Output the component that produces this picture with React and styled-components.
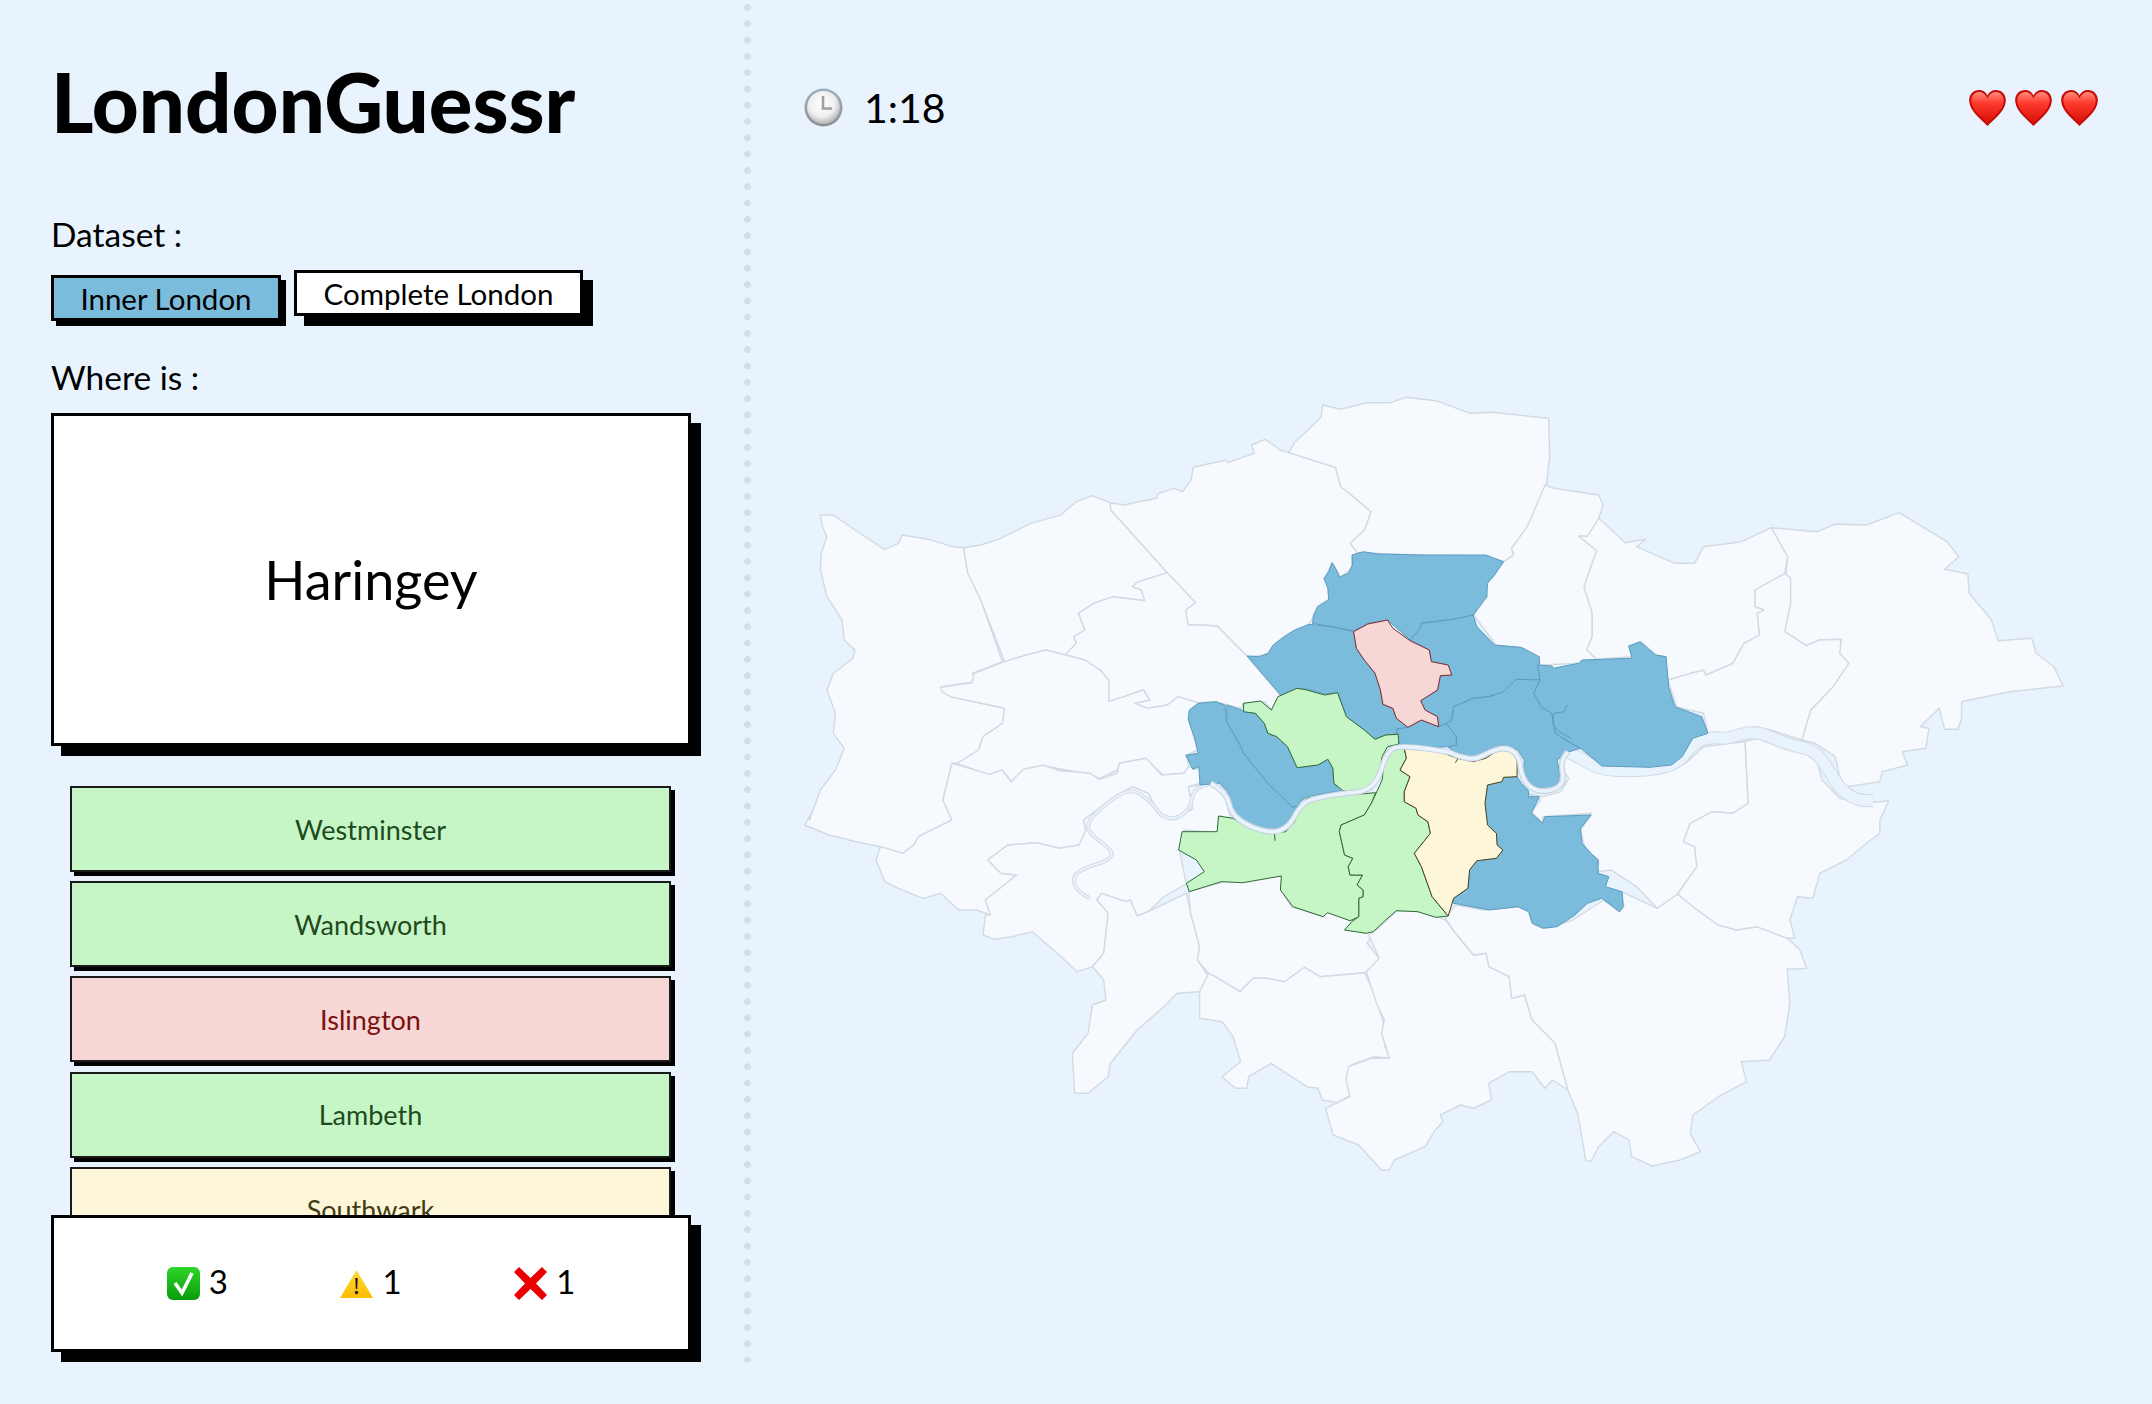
import React from 'react'
import styled, { createGlobalStyle } from 'styled-components'

const GlobalStyle = createGlobalStyle`
    html, body {
        margin: 0;
        background: #e8f3fe;
        font-family: 'Lato', 'Open Sans', sans-serif;
        color: #000;
    }
    #root {
        height: 1404px;
        overflow: hidden;
    }
`

const Page = styled.div`
    display: flex;
    width: 2152px;
    height: 1404px;
`

const Sidebar = styled.aside`
    width: 751px;
    height: 1362px;
    flex-shrink: 0;
    box-sizing: border-box;
    padding-left: 51px;
    display: flex;
    flex-direction: column;
    background-image: radial-gradient(circle at 3.5px 3.5px, #d3dee8 3.2px, transparent 3.7px);
    background-size: 7px 16.3px;
    background-repeat: repeat-y;
    background-position: right 0 top 4px;
`

const Title = styled.h1`
    margin: 54px 0 0;
    font-size: 81.5px;
    line-height: 96px;
    font-weight: 900;
`

const Label = styled.div`
    margin-top: ${(p) => p.$top}px;
    font-size: 33.5px;
    line-height: 40px;
`

const ButtonRow = styled.div`
    display: flex;
    align-items: flex-start;
    gap: 13px;
    margin-top: 16px;
    height: 56px;
`

const DatasetButton = styled.button`
    box-sizing: border-box;
    height: 46px;
    padding: 0;
    width: ${(p) => p.$width}px;
    margin-top: ${(p) => (p.$active ? 5 : 0)}px;
    border: 3px solid #000;
    background: ${(p) => (p.$active ? '#7bbcdc' : '#fff')};
    box-shadow: ${(p) => (p.$active ? '5px 5px 0 #000' : '10px 10px 0 #000')};
    font-family: inherit;
    font-size: 29.5px;
    color: #000;
`

const QuestionCard = styled.div`
    box-sizing: border-box;
    width: 640px;
    height: 333px;
    margin-top: 16px;
    border: 3px solid #000;
    background: #fff;
    box-shadow: 10px 10px 0 #000;
    display: flex;
    align-items: center;
    justify-content: center;
    font-size: 54px;
`

const AnswerList = styled.div`
    flex: 1;
    min-height: 0;
    overflow: hidden;
    margin-top: 40px;
    padding: 0 19px;
    width: 640px;
    box-sizing: border-box;
    display: flex;
    flex-direction: column;
    gap: 9.2px;
`

const tones = {
    good: { bg: '#c6f6c6', fg: '#1e4a1e' },
    bad: { bg: '#f7d6d6', fg: '#7b1010' },
    close: { bg: '#fef6d8', fg: '#3f3c14' },
}

const Answer = styled.div`
    box-sizing: border-box;
    flex-shrink: 0;
    width: 601px;
    height: 86px;
    border: 2px solid #1a1a1a;
    background: ${(p) => tones[p.$tone].bg};
    color: ${(p) => tones[p.$tone].fg};
    box-shadow: 4px 4px 0 #000;
    display: flex;
    align-items: center;
    justify-content: center;
    font-size: 27px;
`

const ScoreCard = styled.div`
    box-sizing: border-box;
    flex-shrink: 0;
    position: relative;
    width: 640px;
    height: 137px;
    margin-bottom: 10px;
    border: 3px solid #000;
    background: #fff;
    box-shadow: 10px 10px 0 #000;
    display: flex;
    align-items: center;
    justify-content: space-evenly;
    font-size: 33px;
`

const Score = styled.div`
    display: flex;
    align-items: center;
    gap: 9px;
`

const Count = styled.span`
    margin-bottom: 5px;
`

const Main = styled.main`
    flex: 1;
    display: flex;
    flex-direction: column;
`

const TopBar = styled.header`
    box-sizing: border-box;
    height: 216px;
    flex-shrink: 0;
    padding: 88px 54px 0 53px;
    display: flex;
    justify-content: space-between;
    align-items: flex-start;
`

const Timer = styled.div`
    display: flex;
    align-items: center;
    gap: 21px;
    font-size: 41px;
    line-height: 38px;
`

const Hearts = styled.div`
    display: flex;
    gap: 9px;
    margin-top: 2px;
`

const MapFrame = styled.svg`
    display: block;
    width: 1401px;
    height: 1188px;
    stroke-linejoin: round;
`

// traced in screen coordinates, one frame per map area
const frame = (ox, oy, sx, sy) => ([str]) =>
    str
        .trim()
        .split(/\s+/)
        .map((p) => {
            const [x, y] = p.split(',').map(Number)
            return `${(ox + x / sx).toFixed(1)},${(oy + y / sy).toFixed(1)}`
        })

const nw = frame(790, 380, 2.306, 3)
const mid = frame(1150, 520, 2.8, 3)
const ne = frame(1400, 380, 2.24, 3)
const sw = frame(780, 680, 2.24, 3)
const so = frame(1050, 870, 1.96, 3)

const shape = (...parts) => `M${parts.flat().join('L')}Z`
const line = (...parts) => `M${parts.flat().join('L')}`

// rounds a traced line off with quadratic curves, for the river
const smooth = (...parts) => {
    const pts = parts.flat().map((p) => p.split(',').map(Number))
    let d = `M${pts[0].join(',')}`
    for (let i = 1; i < pts.length - 1; i++) {
        const mx = ((pts[i][0] + pts[i + 1][0]) / 2).toFixed(1)
        const my = ((pts[i][1] + pts[i + 1][1]) / 2).toFixed(1)
        d += `Q${pts[i].join(',')} ${mx},${my}`
    }
    return `${d}L${pts[pts.length - 1].join(',')}`
}

const outerBoroughs = [
    // Hillingdon
    shape(
        nw`70,405 100,405 150,450 218,508 250,490 258,465 320,478 375,500 400,503 410,580 440,660 490,845 420,880 428,905 350,920 350,935 370,950 495,985 490,1030 445,1070 435,1110 390,1150 380,1150`,
        sw`385,250 365,360 385,420 310,470 300,495 275,520 225,500 170,485 110,465 55,435 70,400`,
        nw`45,1320 70,1230 105,1170 125,1105 100,1060 105,1000 85,930 100,880 145,835 150,810 125,780 120,720 85,650 70,570 72,520 85,470 75,440`
    ),
    // Harrow
    shape(nw`400,503 440,495 480,478 540,440 555,430 610,410 625,405 660,365 698,347 738,368 740,390 870,578 800,607 790,620 810,630 818,662 745,650 700,670 665,700 680,750 655,770 660,790 635,825 590,810 545,825 495,845 440,660 410,580`),
    // Barnet
    shape(nw`738,368 770,375 845,355 850,340 885,325 905,335 925,300 930,262 1005,240 1010,248 1070,220 1065,195 1095,178 1115,195 1130,210 1150,218 1258,262 1270,320 1290,340 1340,395 1325,450 1292,490 1308,518 1295,530 1295,565 1270,590 1250,548 1235,590 1245,655 1215,680 1205,715 1195,735 1140,775 1100,825 1055,830 985,738 945,735 918,735 912,690 935,668 870,578 740,390`),
    // Enfield
    shape(
        nw`1150,218 1165,185 1190,155 1225,110 1228,75 1270,88 1330,68 1385,68 1420,52 1490,62`,
        ne`157,100 205,97 333,115 335,230 328,315 325,360 285,440 250,505 255,525 232,545 190,528 45,525`,
        nw`1308,518 1292,490 1325,450 1340,395 1290,340 1270,320 1258,262`
    ),
    // Brent
    shape(nw`635,825 660,790 655,770 680,750 665,700 700,670 745,650 818,662 810,630 790,620 800,607 870,578 935,668 912,690 918,735 945,735 985,738 1055,830 1130,945 1110,990 1095,965 1045,970 1040,985 980,965 940,968 895,950 870,975 825,985 795,970 830,960 815,930 770,950 735,965 735,900 715,870 680,840`),
    // Ealing
    shape(nw`347,922 420,908 425,880 495,845 545,825 590,810 635,825 680,840 715,870 735,900 735,965 770,950 815,930 830,960 795,970 825,985 870,975 895,950 940,968 920,1020 940,1110 915,1125 920,1165 910,1180 860,1185 820,1135 760,1150 755,1170 715,1195 660,1175 585,1158 540,1170 510,1205 490,1170 460,1185 385,1150 435,1110 445,1070 490,1030 495,985 370,950 350,935`),
    // Hounslow
    shape(sw`385,250 470,283 497,270 518,305 545,268 590,255 625,272 660,275 695,280 715,298 755,280 760,250 820,235 855,285 905,280 915,260 940,270 940,310 915,320 925,385 885,420 850,405 825,340 790,320 755,345 680,420 685,450 670,495 625,505 575,488 510,495 465,540 495,580 530,585 460,660 472,705 440,690 400,690 360,640 320,655 265,625 235,605 215,540 225,500 275,520 300,495 310,470 385,420 365,360`),
    // Richmond
    shape(sw`465,540 510,495 575,488 625,505 670,495 685,450 680,420 755,345 790,320 825,340 850,405 885,420 925,385 915,320 965,310 1000,330 1005,390 1010,420 985,408 980,458 905,450 895,510 910,612 860,650 825,695 800,708 785,660 775,665 720,640 710,660 735,700 725,820 700,860 665,875 630,830 565,755 520,770 480,778 455,765 460,705 472,705 460,660 530,585 495,580`),
    // Kingston
    shape(sw`710,660 735,700 725,820 700,860 725,900 730,960 700,975 690,1060 655,1120 660,1240 690,1240 735,1190 740,1150 800,1050 860,980 890,940 940,935 960,890 935,840 940,800 920,700 910,640 825,695 800,708 785,660 775,665 720,640`),
    // Merton
    shape(sw`915,635 1000,603 1125,588 1122,630 1145,680 1215,710 1230,695 1285,720 1265,750 1310,755 1330,755 1315,790 1345,840 1310,878 1210,890 1175,862 1130,905 1090,895 1060,895 1030,935 975,890 960,880 935,840 940,800 920,700`),
    // Sutton
    shape(sw`940,935 960,880 975,890 1030,935 1060,895 1090,895 1130,905 1175,862 1210,890 1310,878 1330,940 1350,1020 1355,1100 1368,1135 1330,1130 1280,1155 1270,1180 1278,1245 1250,1268 1215,1260 1205,1225 1180,1220 1100,1150 1050,1190 1045,1225 1020,1225 990,1190 1032,1145 1015,1070 990,1025 940,1015`),
    // Croydon
    shape(so`625,195 645,265 620,305 640,400 655,450 650,490 665,565 630,565 585,590 580,630 588,680 540,715 555,795 605,825 650,900 665,900 675,870 735,830 755,780 770,755 765,735 805,705 830,715 865,690 860,640 900,605 945,605 970,655 985,630 1015,660 990,520 945,450 930,375 905,385 900,320 860,290 855,250 830,255 795,190 775,150 735,125 680,122 640,180`),
    // Bromley
    shape(so`775,145 795,105 850,120 920,110 945,130 950,165 975,175 1025,150 1085,90 1115,125 1125,110 1120,65 1190,115 1230,72 1260,110 1310,165 1345,180 1385,170 1445,205 1470,240 1483,295 1445,298 1450,400 1440,500 1410,570 1355,575 1365,635 1310,680 1260,735 1255,790 1275,845 1235,870 1180,888 1140,860 1135,810 1105,785 1075,830 1060,875 1050,870 1035,735 1015,660 990,520 945,450 930,375 905,385 900,320 860,290 855,250 830,255 795,190`),
    // Greenwich
    shape(
        ne`285,1240 320,1250 360,1235 378,1195 360,1160 370,1120 400,1130 450,1180 560,1180 640,1150 680,1100 740,1090 773,1085 780,1270 745,1300 700,1295 650,1330 635,1385 660,1400 665,1460`,
        so`1230,72 1190,115 1150,50 1100,0`,
        ne`440,1475 445,1440 415,1410 405,1350 430,1300 320,1310 320,1330 295,1295 315,1260`
    ),
    // Bexley
    shape(
        ne`773,1085 800,1075 870,1110 930,1125 945,1200 985,1255 1040,1270 1095,1262 1075,1320 1075,1360 1045,1390 1000,1440 940,1480`,
        so`1509,9 1495,85 1465,80 1450,150 1460,205 1445,205 1385,170 1345,180 1310,165 1260,110 1230,72`,
        ne`665,1460 660,1400 635,1385 650,1330 700,1295 745,1300 780,1270`
    ),
    // Havering
    shape(ne`832,443 935,455 975,432 1045,435 1118,398 1225,485 1252,530 1220,568 1272,582 1275,640 1325,720 1340,782 1415,775 1425,820 1465,860 1485,918 1365,935 1258,965 1258,1015 1250,1048 1220,1048 1208,985 1165,1040 1185,1045 1178,1105 1125,1115 1137,1155 1080,1175 1075,1205 1000,1220 985,1190 975,1130 930,1090 900,1080 920,990 970,920 1005,850 985,820 988,778 940,780 910,797 862,755 875,650 865,580 868,530`),
    // Barking and Dagenham
    shape(ne`862,580 875,595 875,670 862,755 910,797 940,780 988,778 985,820 1005,850 970,920 920,990 900,1080 830,1050 795,1040 730,1070 690,1060 680,1000 620,982 600,900 650,880 680,870 685,885 745,850 770,790 805,765 800,700 815,690 795,680 795,630`),
    // Redbridge
    shape(ne`445,415 505,488 550,478 530,500 615,550 660,550 680,500 765,485 832,443 868,530 862,580 795,630 795,680 815,690 800,700 805,765 770,790 745,850 685,885 680,870 650,880 600,900 595,830 575,825 540,785 515,798 520,830 440,838 418,810 430,770 430,700 412,620 440,512 400,468 420,468`),
    // Waltham Forest
    shape(ne`325,315 345,325 445,345 455,375 445,415 420,468 400,468 440,512 412,620 430,700 430,770 418,810 440,838 405,850 315,855 290,820 215,795 165,705 195,650 190,610 232,545 255,525 250,505 285,440`),
]

const blueBoroughs = [
    // Haringey
    shape(mid`455,310 458,285 470,260 500,240 498,205 487,175 500,155 510,128 522,150 530,172 555,160 567,135 566,105 597,95 640,102 760,105 940,105 990,125 965,165 945,190 943,230 925,255 905,285 850,298 760,310 757,325 728,360 665,300 610,310 570,333 510,320`),
    // Camden
    shape(mid`272,408 305,410 330,400 345,375 375,350 405,330 445,313 510,320 570,335 578,385 600,420 630,460 645,510 652,553 680,565 690,595 722,622 690,628 693,642 660,645 630,658 600,630 550,590 525,518 490,522 440,508 412,505 370,530`),
    // Hammersmith and Fulham
    shape(mid`107,598 110,570 135,550 185,545 210,555 215,605 255,680 262,700 330,790 398,860 415,860 405,905 380,935 340,940 290,930 240,895 225,860 218,815 195,790 140,795 137,740 120,748 100,706 135,700 125,655`),
    // Kensington and Chelsea
    shape(mid`215,555 262,572 295,580 320,610 330,640 355,650 385,680 412,743 470,735 498,718 512,745 515,790 535,812 440,830 420,845 415,860 398,860 330,790 262,700 255,680 215,605`),
    // Lewisham
    shape(mid`945,795 985,785 990,772 1028,770 1040,790 1060,812 1060,830 1090,830 1068,880 1100,910 1105,890 1235,885 1205,925 1210,970 1235,1000 1255,1020 1255,1060 1285,1070 1275,1100 1322,1115 1325,1160 1315,1175 1265,1135 1225,1150 1190,1185 1140,1220 1100,1225 1070,1210 1060,1175 1030,1160 950,1170 850,1150 850,1135 890,1105 895,1050 915,1022 970,1015 988,990 972,975 970,940 945,915 938,850`),
    // City
    shape(mid`690,628 722,622 760,600 808,620 830,610 858,650 858,675 835,680 800,682 697,672 693,642`),
    // Hackney
    shape(mid`728,360 757,325 760,310 850,298 905,285 915,320 965,375 1040,382 1090,410 1092,480 1025,478 990,515 950,530 905,535 850,560 845,600 830,610 808,620 805,590 770,570 758,542 805,510 813,467 845,465 835,435 788,425 782,390`),
    // Tower Hamlets
    shape(mid`845,600 850,560 905,535 950,530 990,515 1025,478 1092,480 1075,520 1095,560 1125,580 1135,640 1180,670 1205,685 1175,695 1140,720 1150,775 1135,805 1100,812 1060,800 1045,765 1048,720 1030,690 990,675 945,690 910,715 860,700 835,682 858,675 858,650 830,610`),
    // Newham
    shape(mid`1085,435 1125,438 1130,445 1200,430 1210,420 1350,415 1340,378 1372,365 1415,405 1445,410 1452,500 1470,560 1545,590 1562,640 1520,655 1490,710 1460,735 1400,742 1265,738 1205,685 1180,670 1135,640 1125,580 1095,560 1075,520 1092,480`),
]

const greenBoroughs = [
    // Westminster
    shape(mid`358,530 412,505 440,510 465,518 490,525 525,518 550,590 600,630 630,658 660,645 695,643 697,672 665,680 650,710 640,780 620,808 590,820 540,812 515,790 512,745 498,718 470,735 412,743 385,680 355,650 330,640 320,610 295,580 262,575 262,550 310,543 340,570`),
    // Wandsworth
    shape(mid`80,990 90,935 188,935 192,888 232,895 290,930 345,940 380,935 405,905 415,860 440,835 540,820 590,822 632,818 620,850 600,885 535,915 530,935 545,1005 568,1015 555,1040 560,1065 595,1065 580,1095 597,1110 597,1130 585,1135 585,1190 560,1202 497,1178 485,1190 400,1160 365,1110 368,1068 260,1088 200,1085 110,1115 102,1090 152,1055 130,1020`),
    // Lambeth
    shape(mid`697,680 712,685 718,715 700,750 728,770 712,815 712,845 745,865 750,885 778,905 785,940 740,1000 760,1040 790,1130 835,1188 800,1192 750,1175 690,1172 660,1200 625,1235 605,1240 545,1230 565,1205 585,1190 585,1135 597,1130 597,1110 580,1095 595,1065 560,1065 555,1040 568,1015 545,1005 530,935 535,915 600,885 620,850 635,815 650,780 658,710`),
]

const southwark = shape(mid`712,685 800,690 860,715 905,725 940,715 975,690 1015,690 1028,710 1028,770 990,772 985,785 945,795 938,850 945,915 970,940 972,975 988,990 970,1015 915,1022 895,1050 890,1105 850,1135 835,1188 790,1130 760,1040 740,1000 785,940 778,905 750,885 745,865 712,845 712,815 728,770 700,750 718,715`)
const islington = shape(mid`570,335 610,312 665,300 680,325 728,362 782,390 788,425 835,435 845,465 813,467 805,510 758,542 770,570 805,590 808,620 760,600 722,622 690,595 680,565 652,553 645,510 630,460 600,420 578,385`)

const thamesWest = smooth(sw`695,655 665,635 655,590 680,565 740,540 745,510 690,460 690,420 745,355 790,325 835,370 850,405 885,420 920,385 925,330 965,310`)
const thamesCentre = smooth(
    sw`965,310 1000,335 1010,400 1050,440 1105,460 1140,440 1160,390 1180,360 1260,340 1310,335 1340,300 1358,220 1385,195 1500,215`,
    mid`860,708 910,720 950,695 1000,680 1035,710 1040,770 1070,810 1120,815 1160,790 1150,725 1170,695`
)
const thamesEast = smooth(
    mid`1170,695 1205,715 1265,752 1400,752 1480,730 1520,670 1568,650`,
    ne`730,1078 795,1050 870,1095 930,1110 960,1170 985,1225 1020,1260 1060,1262`
)
const riverLea = line(mid`1168,555 1160,575 1130,580 1128,615 1145,635 1180,655`)
const sideTicks = [line(mid`349,940 350,962`), line(mid`862,716 855,728`)]

const Borough = styled.path`
    fill: ${(p) => p.$fill};
    stroke: ${(p) => p.$stroke};
    stroke-width: ${(p) => p.$weight || 1}px;
`

const River = styled.path`
    fill: none;
    stroke: ${(p) => p.$color};
    stroke-width: ${(p) => p.$width}px;
`

const LondonMap = () => (
    <MapFrame viewBox="751 216 1401 1188">
        {outerBoroughs.map((d) => (
            <Borough key={d} d={d} $fill="#f6faff" $stroke="#d2dae2" $weight={1.4} />
        ))}
        <River d={thamesWest} $color="#d2dae2" $width={4} />
        <River d={thamesWest} $color="#e8f3fe" $width={2} />
        <River d={thamesEast} $color="#d2dae2" $width={13} />
        <River d={thamesEast} $color="#e8f3fe" $width={11} />
        {blueBoroughs.map((d) => (
            <Borough key={d} d={d} $fill="#7bbbdc" $stroke="#5a9cc0" />
        ))}
        <River d={riverLea} $color="#5a9cc0" $width={1} />
        {greenBoroughs.map((d) => (
            <Borough key={d} d={d} $fill="#c6f6c6" $stroke="#2f6a35" />
        ))}
        <Borough d={southwark} $fill="#fef6d8" $stroke="#47421c" />
        <Borough d={islington} $fill="#f7d6d6" $stroke="#84282c" />
        {sideTicks.map((d) => (
            <River key={d} d={d} $color="#2f5a30" $width={1} />
        ))}
        <River d={thamesCentre} $color="#c9d4de" $width={6} />
        <River d={thamesCentre} $color="#e8f3fe" $width={3.6} />
    </MapFrame>
)

const ClockIcon = () => (
    <svg width="39" height="39" viewBox="0 0 39 39">
        <defs>
            <radialGradient id="clockFace" cx="45%" cy="38%" r="62%">
                <stop offset="0%" stopColor="#fff" />
                <stop offset="65%" stopColor="#eeeeee" />
                <stop offset="100%" stopColor="#b5b5b5" />
            </radialGradient>
            <linearGradient id="clockRim" x1="0" y1="0" x2="0" y2="1">
                <stop offset="0%" stopColor="#9fb0c4" />
                <stop offset="100%" stopColor="#8e8e8e" />
            </linearGradient>
        </defs>
        <circle cx="19.500" cy="19.500" r="19" fill="url(#clockRim)" />
        <circle cx="19.500" cy="19.500" r="16.500" fill="url(#clockFace)" />
        <path d="M19 8v12.500h9" fill="none" stroke="#a0a0a0" strokeWidth="2.600" />
    </svg>
)

const HeartIcon = () => (
    <svg width="37" height="36" viewBox="0 0 37 36">
        <defs>
            <linearGradient id="heartFill" x1="0" y1="0" x2="0" y2="1">
                <stop offset="0%" stopColor="#ff8c80" />
                <stop offset="35%" stopColor="#ff3b2e" />
                <stop offset="100%" stopColor="#d80f08" />
            </linearGradient>
        </defs>
        <path
            d="M18.500 36C14 31 1 22 .2 11.500-.4 4.500 4.500 0 10 0c4 0 7 2 8.500 5.500C20 2 23 0 27 0c5.500 0 10.400 4.500 9.800 11.500C36 22 23 31 18.500 36z"
            fill="#c50c06"
        />
        <path
            d="M18.500 33C14 28.500 3 20.500 2.300 11.500 1.900 6 5.500 2 10 2c3.800 0 6.800 2.400 8.500 6.500C20.200 4.400 23.200 2 27 2c4.500 0 8.100 4 7.700 9.500C34 20.500 23 28.500 18.500 33z"
            fill="url(#heartFill)"
        />
    </svg>
)

const CheckIcon = () => (
    <svg width="33" height="33" viewBox="0 0 33 33">
        <defs>
            <linearGradient id="checkFill" x1="0" y1="0" x2="0" y2="1">
                <stop offset="0%" stopColor="#2fd52b" />
                <stop offset="100%" stopColor="#0a9c0a" />
            </linearGradient>
        </defs>
        <rect width="33" height="33" rx="6" fill="url(#checkFill)" />
        <path d="M8 16l7 10 10-20" fill="none" stroke="#fff" strokeWidth="3.600" />
    </svg>
)

const WarningIcon = () => (
    <svg width="33" height="28" viewBox="0 0 33 28">
        <defs>
            <linearGradient id="warnFill" x1="0" y1="0" x2="0" y2="1">
                <stop offset="0%" stopColor="#ffd93f" />
                <stop offset="100%" stopColor="#fdbd00" />
            </linearGradient>
        </defs>
        <path d="M16.500 0L33 28H0z" fill="url(#warnFill)" />
        <path d="M15.300 8h2.400l-.5 11h-1.400z" fill="#1b1b1b" />
        <circle cx="16.500" cy="22.500" r="1.700" fill="#1b1b1b" />
    </svg>
)

const CrossIcon = () => (
    <svg width="33" height="33" viewBox="0 0 33 33">
        <path d="M5 0l11.500 11L28 0l5 5-11 11.500L33 28l-5 5-11.500-11L5 33l-5-5 11-11.500L0 5z" fill="#ea0000" />
    </svg>
)

const answers = [
    { name: 'Westminster', tone: 'good' },
    { name: 'Wandsworth', tone: 'good' },
    { name: 'Islington', tone: 'bad' },
    { name: 'Lambeth', tone: 'good' },
    { name: 'Southwark', tone: 'close' },
]

const App = () => (
    <>
        <GlobalStyle />
        <Page>
            <Sidebar>
                <Title>LondonGuessr</Title>
                <Label $top={64}>Dataset :</Label>
                <ButtonRow>
                    <DatasetButton $active $width={230}>
                        Inner London
                    </DatasetButton>
                    <DatasetButton $width={289}>Complete London</DatasetButton>
                </ButtonRow>
                <Label $top={31}>Where is :</Label>
                <QuestionCard>Haringey</QuestionCard>
                <AnswerList>
                    {answers.map((a) => (
                        <Answer key={a.name} $tone={a.tone}>
                            {a.name}
                        </Answer>
                    ))}
                </AnswerList>
                <ScoreCard>
                    <Score>
                        <CheckIcon />
                        <Count>3</Count>
                    </Score>
                    <Score>
                        <WarningIcon />
                        <Count>1</Count>
                    </Score>
                    <Score>
                        <CrossIcon />
                        <Count>1</Count>
                    </Score>
                </ScoreCard>
            </Sidebar>
            <Main>
                <TopBar>
                    <Timer>
                        <ClockIcon />
                        1:18
                    </Timer>
                    <Hearts>
                        <HeartIcon />
                        <HeartIcon />
                        <HeartIcon />
                    </Hearts>
                </TopBar>
                <LondonMap />
            </Main>
        </Page>
    </>
)

export default App
